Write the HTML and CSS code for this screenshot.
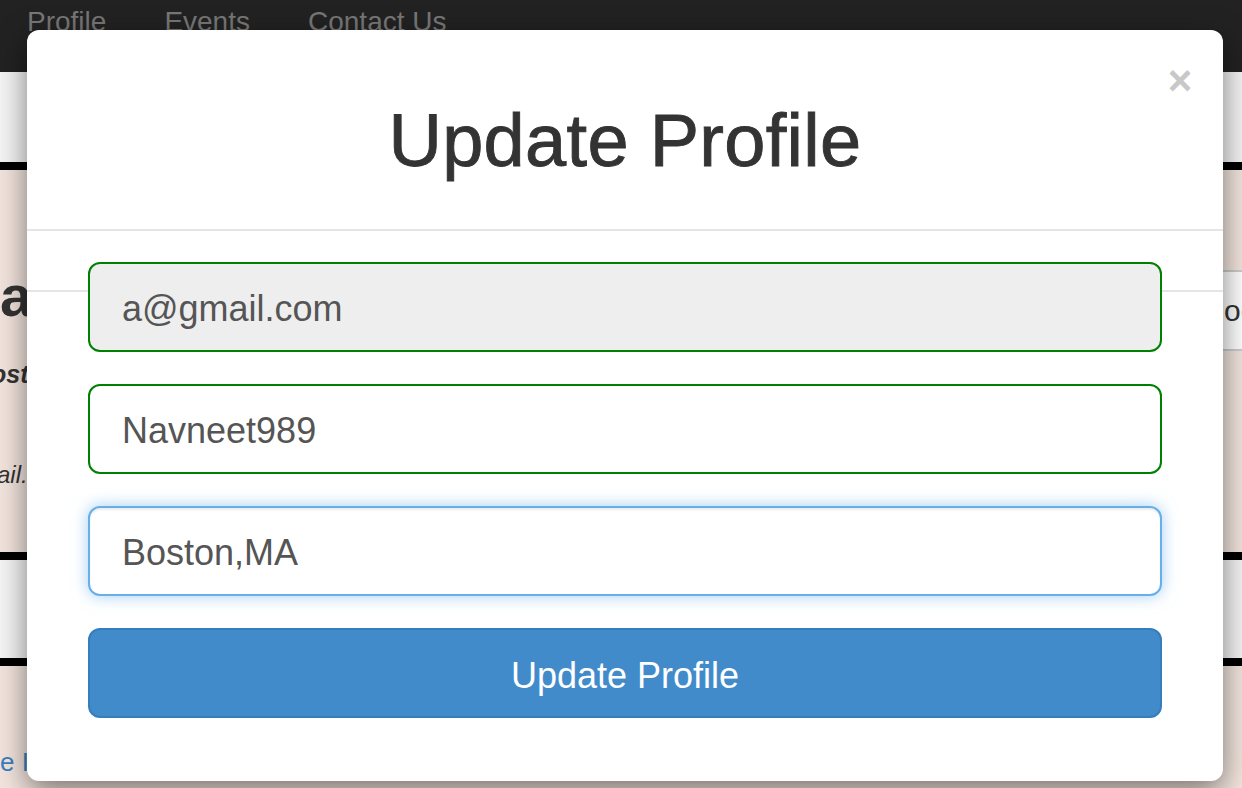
FILE: index.html
```html
<!DOCTYPE html>
<html lang="en">
<head>
<meta charset="utf-8">
<title>Update Profile</title>
<link rel="stylesheet" href="styles.css">
</head>
<body>
<div class="page">
  <nav class="topnav">
    <a class="navlink" href="#">Profile</a>
    <a class="navlink" href="#">Events</a>
    <a class="navlink" href="#">Contact Us</a>
  </nav>
  <div class="band"></div>
  <div class="rule"></div>
  <section class="pink main-sec">
    <div class="left-col">
      <h1 class="bg-title">a</h1>
      <p class="bg-sub">ost</p>
      <p class="bg-mail">ail.</p>
    </div>
    <div class="right-col">
      <div class="rbox">Book</div>
    </div>
  </section>
  <div class="rule"></div>
  <div class="band band2"></div>
  <div class="rule"></div>
  <section class="pink bottom-sec">
    <a class="bg-link" href="#">e I</a>
  </section>
</div>

<div class="modal">
  <div class="modal-header">
    <button class="close" type="button">&times;</button>
    <h2 class="modal-title">Update Profile</h2>
  </div>
  <form class="modal-body">
    <input class="field readonly" type="text" value="a@gmail.com" readonly>
    <input class="field" type="text" value="Navneet989">
    <input class="field focused" type="text" value="Boston,MA">
    <button class="submit" type="button">Update Profile</button>
  </form>
</div>
</body>
</html>
```
FILE: styles.css
```css
html, body {
  margin: 0;
  padding: 0;
}
body {
  width: 1242px;
  height: 788px;
  overflow: hidden;
  position: relative;
  font-family: "Liberation Sans", Arial, Helvetica, sans-serif;
  background: #f3e5de;
}
.page {
  display: flex;
  flex-direction: column;
  height: 788px;
}
.topnav {
  height: 72px;
  background: #222;
  display: flex;
  gap: 58px;
  padding-left: 27px;
  box-sizing: border-box;
  padding-top: 7px;
}
.navlink {
  color: #777;
  text-decoration: none;
  font-size: 28px;
  line-height: 29px;
}
.band {
  height: 90px;
  background: #f5f5f5;
}
.band2 {
  height: 98px;
}
.rule {
  height: 8px;
  background: #000;
}
.pink {
  background: #f3e5de;
}
.main-sec {
  height: 382px;
  display: flex;
  justify-content: space-between;
}
.left-col {
  width: 300px;
  white-space: nowrap;
}
.bg-title {
  margin: 0;
  padding-top: 94px;
  font-size: 58px;
  line-height: 64px;
  font-weight: bold;
  color: #333;
}
.bg-sub {
  margin: 0;
  padding-top: 30px;
  font-size: 25px;
  line-height: 32px;
  font-weight: bold;
  font-style: italic;
  color: #333;
  text-indent: -9px;
}
.bg-mail {
  margin: 0;
  padding-top: 72px;
  font-size: 24px;
  line-height: 26px;
  font-style: italic;
  color: #333;
  text-indent: -3px;
}
.right-col {
  width: 160px;
}
.rbox {
  margin-top: 100px;
  height: 81px;
  box-sizing: border-box;
  border-top: 2px solid #ccc;
  border-bottom: 2px solid #ccc;
  background: #fff;
  padding-left: 122px;
  font-size: 30px;
  line-height: 77px;
  color: #333;
  white-space: nowrap;
}
.bottom-sec {
  flex: 1;
  padding-top: 83px;
  box-sizing: border-box;
}
.bg-link {
  font-size: 26px;
  line-height: 26px;
  color: #3a7fc0;
  text-decoration: none;
  white-space: nowrap;
}

/* modal */
.modal {
  position: absolute;
  top: 30px;
  left: 27px;
  width: 1196px;
  height: 751px;
  background: #fff;
  border-radius: 12px;
  box-shadow: 0 10px 30px rgba(0, 0, 0, 0.5);
  box-sizing: border-box;
}
.modal-header {
  position: relative;
  height: 201px;
  box-sizing: border-box;
  padding-top: 71px;
  border-bottom: 2px solid #e5e5e5;
  text-align: center;
}
.modal-title {
  margin: 0;
  font-size: 74px;
  line-height: 80px;
  font-weight: normal;
  color: #333;
  -webkit-text-stroke: 0.9px #333;
  letter-spacing: 0.3px;
}
.close {
  position: absolute;
  top: 30px;
  right: 22px;
  width: 42px;
  height: 42px;
  padding: 0;
  border: 0;
  background: transparent;
  font-family: "Liberation Sans", Arial, sans-serif;
  font-size: 42px;
  line-height: 42px;
  font-weight: bold;
  color: #c8c8c8;
  cursor: pointer;
}
.modal-body {
  margin: 0;
  padding: 31px 61px 63px 61px;
  display: flex;
  flex-direction: column;
  gap: 32px;
  background: linear-gradient(#e5e5e5, #e5e5e5) no-repeat 0 59px / 100% 2px;
}
.field {
  display: block;
  width: 100%;
  height: 90px;
  box-sizing: border-box;
  margin: 0;
  padding: 4px 32px 0 32px;
  border: 2px solid #008000;
  border-radius: 12px;
  background: #fff;
  font-family: "Liberation Sans", Arial, sans-serif;
  font-size: 36px;
  color: #555;
  outline: none;
}
.readonly {
  background: #eee;
}
.focused {
  border-color: #66afe9;
  box-shadow: inset 0 2px 2px rgba(0, 0, 0, 0.075), 0 0 16px rgba(102, 175, 233, 0.6);
}
.submit {
  display: block;
  width: 100%;
  height: 90px;
  box-sizing: border-box;
  margin: 0;
  padding: 5px 0 0 0;
  border: 2px solid #357ebd;
  border-radius: 12px;
  background: #428bca;
  color: #fff;
  font-family: "Liberation Sans", Arial, sans-serif;
  font-size: 36px;
  cursor: pointer;
}
```
